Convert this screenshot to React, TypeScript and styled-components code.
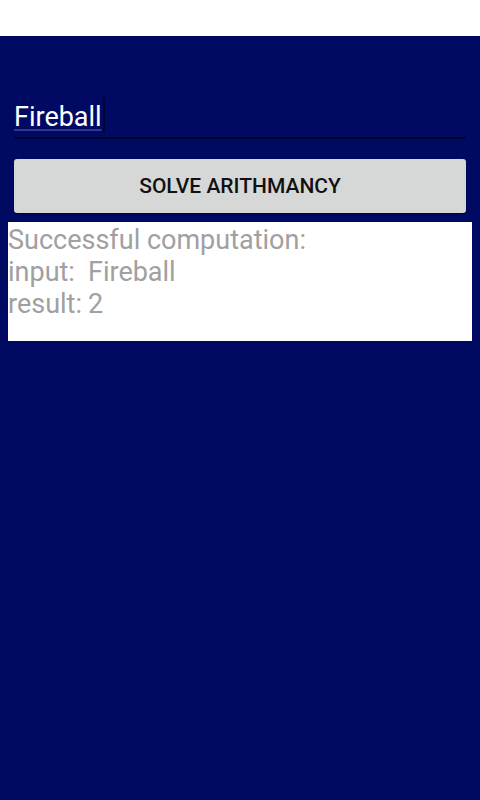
import React from "react";
import styled, { createGlobalStyle } from "styled-components";

const Global = createGlobalStyle`
  html, body { margin: 0; padding: 0; background: #ffffff; }
  body { font-family: Roboto, "Noto Sans", "Liberation Sans", sans-serif; }
`;

const Screen = styled.div`
  width: 480px;
  height: 800px;
  display: flex;
  flex-direction: column;
  background: #ffffff;
`;

const StatusBar = styled.div`
  height: 36px;
  background: #ffffff;
  flex: none;
`;

const Main = styled.main`
  flex: 1;
  background: #000a63;
  display: flex;
  flex-direction: column;
  padding: 65px 8px 0;
`;

const Field = styled.div`
  margin: 0 6px;
  padding-bottom: 4px;
  border-bottom: 2px solid #000230;
  display: flex;
  align-items: center;
  height: 32px;
`;

const FieldText = styled.span`
  color: #ffffff;
  font-size: 27px;
  line-height: 32px;
  text-decoration: underline;
  text-decoration-color: #33378a;
  text-decoration-thickness: 2px;
  text-underline-offset: 3px;
`;

const Cursor = styled.span`
  width: 2px;
  height: 36px;
  margin-left: 1px;
  background: #000533;
  align-self: flex-end;
`;

const Button = styled.button`
  margin: 20px 6px 0;
  height: 54px;
  border: none;
  border-radius: 3px;
  background: #d6d7d7;
  color: #111111;
  font-family: Roboto, "Noto Sans", "Liberation Sans", sans-serif;
  font-weight: 500;
  font-size: 21px;
  text-transform: uppercase;
  box-shadow: 0 1px 2px rgba(0, 0, 0, 0.4);
  cursor: pointer;
`;

const Output = styled.section`
  margin-top: 9px;
  height: 119px;
  background: #ffffff;
  color: #a0a0a0;
  font-size: 27px;
  line-height: 32px;
  padding-top: 2px;
  box-sizing: border-box;
`;

const Row = styled.div`
  display: grid;
  grid-template-columns: 80px auto;
  white-space: nowrap;
`;

export default function App() {
  return (
    <Screen>
      <Global />
      <StatusBar />
      <Main>
        <Field>
          <FieldText>Fireball</FieldText>
          <Cursor />
        </Field>
        <Button>Solve Arithmancy</Button>
        <Output>
          <div>Successful computation:</div>
          <Row>
            <span>input:</span>
            <span>Fireball</span>
          </Row>
          <Row>
            <span>result:</span>
            <span>2</span>
          </Row>
        </Output>
      </Main>
    </Screen>
  );
}
